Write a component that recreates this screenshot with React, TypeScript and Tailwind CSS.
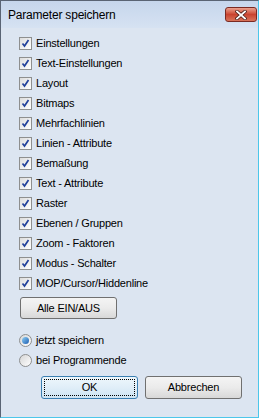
import React from "react";

const items = [
  "Einstellungen",
  "Text-Einstellungen",
  "Layout",
  "Bitmaps",
  "Mehrfachlinien",
  "Linien - Attribute",
  "Bemaßung",
  "Text - Attribute",
  "Raster",
  "Ebenen / Gruppen",
  "Zoom - Faktoren",
  "Modus - Schalter",
  "MOP/Cursor/Hiddenline",
];

function Check() {
  return (
    <span className="w-[13px] h-[13px] border border-[#8e8f8f] bg-gradient-to-br from-[#dcdcdc] to-[#ffffff] flex items-center justify-center shrink-0">
      <svg width="9" height="9" viewBox="0 0 9 9">
        <path d="M1.5 4.5 L3.5 7 L7.5 1" fill="none" stroke="#21409a" strokeWidth="1.7" />
      </svg>
    </span>
  );
}

function Radio({ on }: { on: boolean }) {
  return (
    <span className="w-[13px] h-[13px] rounded-full border border-[#8e8f8f] bg-gradient-to-br from-[#d6d6d6] to-[#ffffff] flex items-center justify-center shrink-0">
      {on && <span className="w-[7px] h-[7px] rounded-full bg-gradient-to-br from-[#8fd0f5] to-[#1c5db0]" />}
    </span>
  );
}

export default function App() {
  const font = { fontFamily: '"Liberation Sans", Arial, sans-serif' };
  return (
    <div className="w-[263px] h-[419px] bg-white" style={font}>
      <div className="w-[259px] h-[418px] border-l border-t border-[#5a6474] border-r border-r-[#4cc6ea] border-b border-b-[#4cc6ea] flex flex-col">
        <div className="h-[27px] shrink-0 bg-gradient-to-b from-[#c6d6ec] to-[#d6e2f2] flex items-start justify-between pl-[7px] pr-[1px] pt-[6px]">
          <span className="text-[12px] text-black tracking-[-0.2px] leading-[15px] pt-[1px]">Parameter speichern</span>
          <span className="w-[32px] h-[15px] rounded-[3px] border border-[#7a2a22] bg-gradient-to-b from-[#eaa08e] via-[#c9432f] to-[#d8735a] flex items-center justify-center">
            <svg width="12" height="10" viewBox="0 0 12 10">
              <path d="M2 1.5 L10 8.5 M10 1.5 L2 8.5" stroke="#4a1f1a" strokeWidth="3.4" strokeLinecap="square" />
              <path d="M2 1.5 L10 8.5 M10 1.5 L2 8.5" stroke="#ffffff" strokeWidth="1.8" strokeLinecap="square" />
            </svg>
          </span>
        </div>
        <div className="flex-1 bg-[#dce5f1] flex flex-col pl-[18px] pt-[9px] text-[11px] text-black tracking-[-0.2px]">
          <div className="flex flex-col gap-[7px]">
            {items.map((t) => (
              <div key={t} className="flex items-center gap-[4px] h-[13px] leading-[13px]">
                <Check />
                <span>{t}</span>
              </div>
            ))}
          </div>
          <button className="mt-[7px] ml-[1px] w-[97px] h-[22px] rounded-[3px] border border-[#707070] bg-gradient-to-b from-[#f4f4f4] via-[#ebebeb] to-[#d8d8d8] text-[11px] tracking-[-0.2px]">
            Alle EIN/AUS
          </button>
          <div className="mt-[15px] flex flex-col gap-[7px]">
            <div className="flex items-center gap-[4px] h-[13px]">
              <Radio on />
              <span>jetzt speichern</span>
            </div>
            <div className="flex items-center gap-[4px] h-[13px]">
              <Radio on={false} />
              <span>bei Programmende</span>
            </div>
          </div>
          <div className="mt-[9px] ml-[22px] flex gap-[7px]">
            <button className="w-[97px] h-[23px] rounded-[3px] border border-[#3c7fb1] bg-gradient-to-b from-[#eef7fc] via-[#e0eef8] to-[#cde4f3] p-[2px] text-[11px]">
              <span className="w-full h-full border border-dotted border-black flex items-center justify-center">OK</span>
            </button>
            <button className="w-[97px] h-[23px] rounded-[3px] border border-[#707070] bg-gradient-to-b from-[#f4f4f4] via-[#ebebeb] to-[#d8d8d8] text-[11px] tracking-[-0.2px]">
              Abbrechen
            </button>
          </div>
        </div>
      </div>
    </div>
  );
}
